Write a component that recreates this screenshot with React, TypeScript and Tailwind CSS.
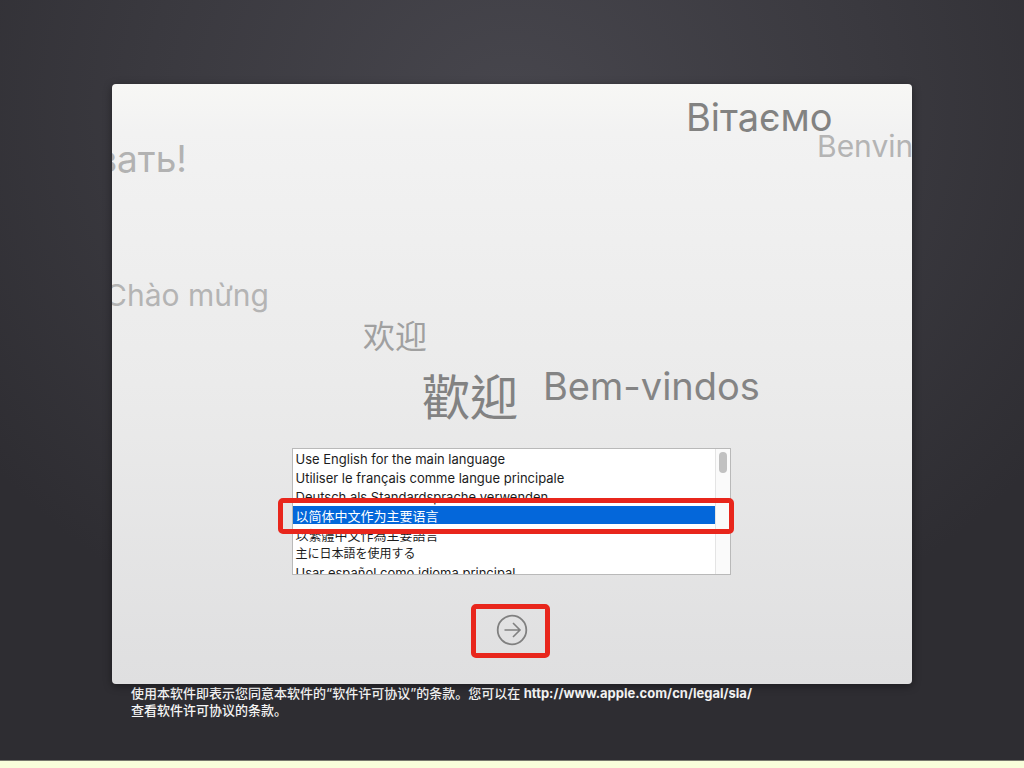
import { useState } from "react";

type Greeting = {
  text: string;
  lang: string;
  className: string;
};

const greetings: Greeting[] = [
  { text: "Вітаємо", lang: "uk", className: "left-[574px] top-[9px] text-[38px] text-[#828281]" },
  { text: "Benvinguts", lang: "ca", className: "left-[705px] top-[38px] text-[30px] text-[#b4b4b4]" },
  {
    text: "Добро пожаловать!",
    lang: "ru",
    className: "right-[725px] top-[51px] text-[37px] text-[#b2b2b2]",
  },
  { text: "Chào mừng", lang: "vi", className: "right-[643px] top-[187px] text-[30px] text-[#b4b4b4]" },
  {
    text: "欢迎",
    lang: "zh-CN",
    className: "left-[251px] top-[229px] text-[32px] text-[#a0a0a0]",
  },
  { text: "歡迎", lang: "zh-TW", className: "left-[310px] top-[290px] text-[48px] text-[#828282]" },
  { text: "Bem-vindos", lang: "pt", className: "left-[431px] top-[278px] text-[38px] text-[#848484]" },
];

const languages = [
  { id: "en", label: "Use English for the main language", size: "text-[13px]" },
  { id: "fr", label: "Utiliser le français comme langue principale", size: "text-[13px]" },
  { id: "de", label: "Deutsch als Standardsprache verwenden", size: "text-[13px]" },
  { id: "zh-CN", label: "以简体中文作为主要语言", size: "text-[13px]" },
  { id: "zh-TW", label: "以繁體中文作為主要語言", size: "text-[13px]" },
  { id: "ja", label: "主に日本語を使用する", size: "text-[12px]" },
  { id: "es", label: "Usar español como idioma principal", size: "text-[13px]" },
];

function Greetings() {
  return (
    <div className="pointer-events-none absolute inset-0 overflow-hidden rounded-[4px]">
      {greetings.map((greeting) => (
        <span
          key={greeting.lang}
          lang={greeting.lang}
          className={`absolute whitespace-nowrap leading-[48px] ${greeting.className}`}
        >
          {greeting.text}
        </span>
      ))}
    </div>
  );
}

function LanguageList() {
  const [selected, setSelected] = useState("zh-CN");

  return (
    <div className="relative mr-[2px] w-full max-w-[439px]">
      <fieldset
        aria-label="Language"
        className="flex h-[127px] overflow-hidden border border-[#b9b9b9] bg-white"
      >
        <div className="flex flex-1 flex-col gap-px overflow-hidden">
          {languages.map((language) => (
            <label
              key={language.id}
              lang={language.id}
              className={`relative block h-[18px] shrink-0 px-[3px] leading-[20px] whitespace-nowrap text-[#1c1c1c] has-checked:bg-[#0467da] has-checked:text-white ${language.size}`}
            >
              <input
                type="radio"
                name="language"
                value={language.id}
                checked={selected === language.id}
                onChange={() => setSelected(language.id)}
                className="sr-only"
              />
              {language.label}
            </label>
          ))}
        </div>
        <div className="flex w-[15px] justify-center border-l border-[#e4e4e4] bg-[#fafafa] pt-[3px]">
          <div className="h-[21px] w-2 rounded-full bg-[#c1c1c1]" />
        </div>
      </fieldset>
      <div className="pointer-events-none absolute top-[50px] right-[-3px] left-[-14px] h-9 rounded-[5px] border-[5px] border-[#e8261c]" />
    </div>
  );
}

function NextButton() {
  return (
    <button
      type="button"
      aria-label="Continue"
      className="relative flex size-8 items-center justify-center text-[#808080]"
    >
      <svg viewBox="0 0 32 32" className="size-8" fill="none" stroke="currentColor">
        <circle cx="16" cy="16" r="14.3" strokeWidth="1.8" />
        <path d="M8.5 16h15M17 9l7 7-7 7" strokeWidth="1.6" />
      </svg>
      <span className="pointer-events-none absolute top-[-10px] right-[-22px] bottom-[-12px] left-[-25px] rounded-[5px] border-[5px] border-[#e8261c]" />
    </button>
  );
}

export default function App() {
  return (
    <div className="flex min-h-screen flex-col bg-[#302f33] bg-[radial-gradient(ellipse_65%_75%_at_50%_14%,#47464d_0%,#3a393f_55%,#2e2d32_100%)] font-['Inter','Noto_Sans_CJK_SC',sans-serif]">
      <main className="mx-auto flex w-full max-w-[800px] flex-1 flex-col pt-[84px]">
        <section className="relative flex min-h-[600px] flex-col items-center justify-end gap-[39px] rounded-[4px] bg-[linear-gradient(#f7f7f5,#f2f2f2_8%,#ebebeb_50%,#dfdfe0)] pb-[38px] shadow-[0_2px_8px_rgba(0,0,0,0.4)]">
          <Greetings />
          <LanguageList />
          <NextButton />
        </section>
        <p className="px-[19px] pt-px text-[13px] leading-[17px] font-medium text-[#f5f5f5]">
          使用本软件即表示您同意本软件的“软件许可协议”的条款。您可以在{" "}
          <a href="http://www.apple.com/cn/legal/sla/" className="font-bold">
            http://www.apple.com/cn/legal/sla/
          </a>
          <br />
          查看软件许可协议的条款。
        </p>
      </main>
      <div className="h-2 border-t border-[#77776c] bg-[#f9fedb]" />
    </div>
  );
}
